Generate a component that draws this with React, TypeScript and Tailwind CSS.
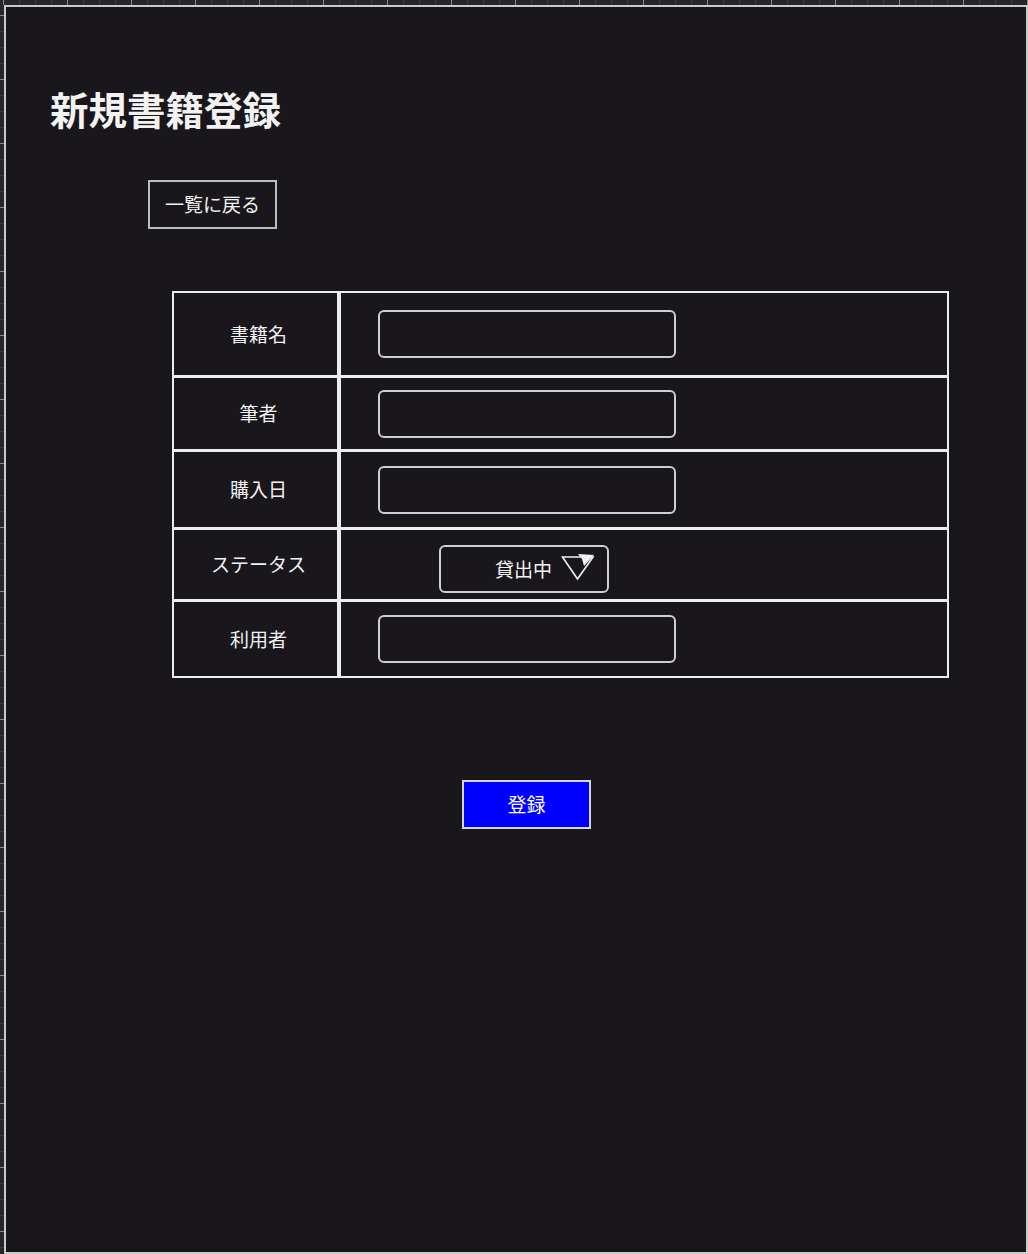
const FONT = "font-['Noto_Sans_CJK_JP','Noto_Sans',sans-serif]";

const rows = [
  { label: "書籍名", h: "h-[82px]", kind: "input" },
  { label: "筆者", h: "h-[74px]", kind: "input" },
  { label: "購入日", h: "h-[78px]", kind: "input" },
  { label: "ステータス", h: "h-[72px]", kind: "select" },
  { label: "利用者", h: "h-[77px]", kind: "input" },
];

function TopRuler() {
  return (
    <div className="h-[5px] bg-[#28262b] flex pl-[3px] overflow-hidden shrink-0">
      {Array.from({ length: 65 }).map((_, i) => (
        <div
          key={i}
          className={
            i % 4 === 0
              ? "w-[16px] shrink-0 border-l border-[#8a8a8a]"
              : "w-[16px] shrink-0 border-l border-[#3c3a40]"
          }
        />
      ))}
    </div>
  );
}

function LeftRuler() {
  return (
    <div className="w-[4px] bg-[#28262b] flex flex-col pt-[10px] overflow-hidden shrink-0">
      {Array.from({ length: 80 }).map((_, i) => (
        <div
          key={i}
          className={
            i % 4 === 0
              ? "h-[16px] shrink-0 border-t border-[#8a8a8a]"
              : "h-[16px] shrink-0 border-t border-[#3c3a40]"
          }
        />
      ))}
    </div>
  );
}

function StatusSelect() {
  return (
    <div className="ml-[98px] mt-[8px] w-[170px] h-[48px] rounded-[6px] border-2 border-[#cfcfcf] flex items-center pl-[54px]">
      <span className="text-[19px] leading-none text-[#f2f2f2]">貸出中</span>
      <svg className="ml-[9px] mt-[-4px]" width="34" height="28" viewBox="0 0 34 28">
        <polygon points="1.5,4 32,4 16.5,26" fill="none" stroke="#f2f2f2" strokeWidth="1.6" strokeLinejoin="miter" />
        <polygon points="17,1 33,2 23,13 21,6" fill="#f2f2f2" />
      </svg>
    </div>
  );
}

export default function App() {
  return (
    <div className={`w-[1028px] h-[1254px] bg-[#28262b] flex flex-col ${FONT}`}>
      <TopRuler />
      <div className="flex flex-1 min-h-0">
        <LeftRuler />
        <div className="flex-1 bg-[#19171c] border-2 border-[#cacaca] flex flex-col items-start">
          <h1 className="ml-[44px] mt-[82px] text-[38.5px] leading-[38px] font-bold text-[#f2f2f2]">
            新規書籍登録
          </h1>

          <button
            type="button"
            className="ml-[142px] mt-[53px] w-[129px] h-[49px] border-2 border-[#bdbdbd] text-[19px] text-[#f2f2f2] flex items-center justify-center"
          >
            一覧に戻る
          </button>

          {/* 入力フォーム */}
          <div className="ml-[166px] mt-[62px] w-[777px] border-2 border-[#ededed] flex flex-col">
            {rows.map((row, i) => (
              <div
                key={row.label}
                className={
                  i === 0
                    ? `flex ${row.h}`
                    : `flex ${row.h} border-t-[3px] border-[#ededed]`
                }
              >
                <div className="w-[167px] pl-[6px] flex items-center justify-center border-r-4 border-[#ededed] text-[19px] text-[#f2f2f2]">
                  {row.label}
                </div>
                <div className="flex-1 flex items-center">
                  {row.kind === "input" ? (
                    <div className="ml-[37px] w-[298px] h-[48px] rounded-[6px] border-2 border-[#cfcfcf]" />
                  ) : (
                    <StatusSelect />
                  )}
                </div>
              </div>
            ))}
          </div>

          <button
            type="button"
            className="ml-[456px] mt-[102px] w-[129px] h-[49px] bg-[#0000ff] border-2 border-[#d6d6d6] text-[19px] text-white flex items-center justify-center"
          >
            登録
          </button>
        </div>
      </div>
    </div>
  );
}
